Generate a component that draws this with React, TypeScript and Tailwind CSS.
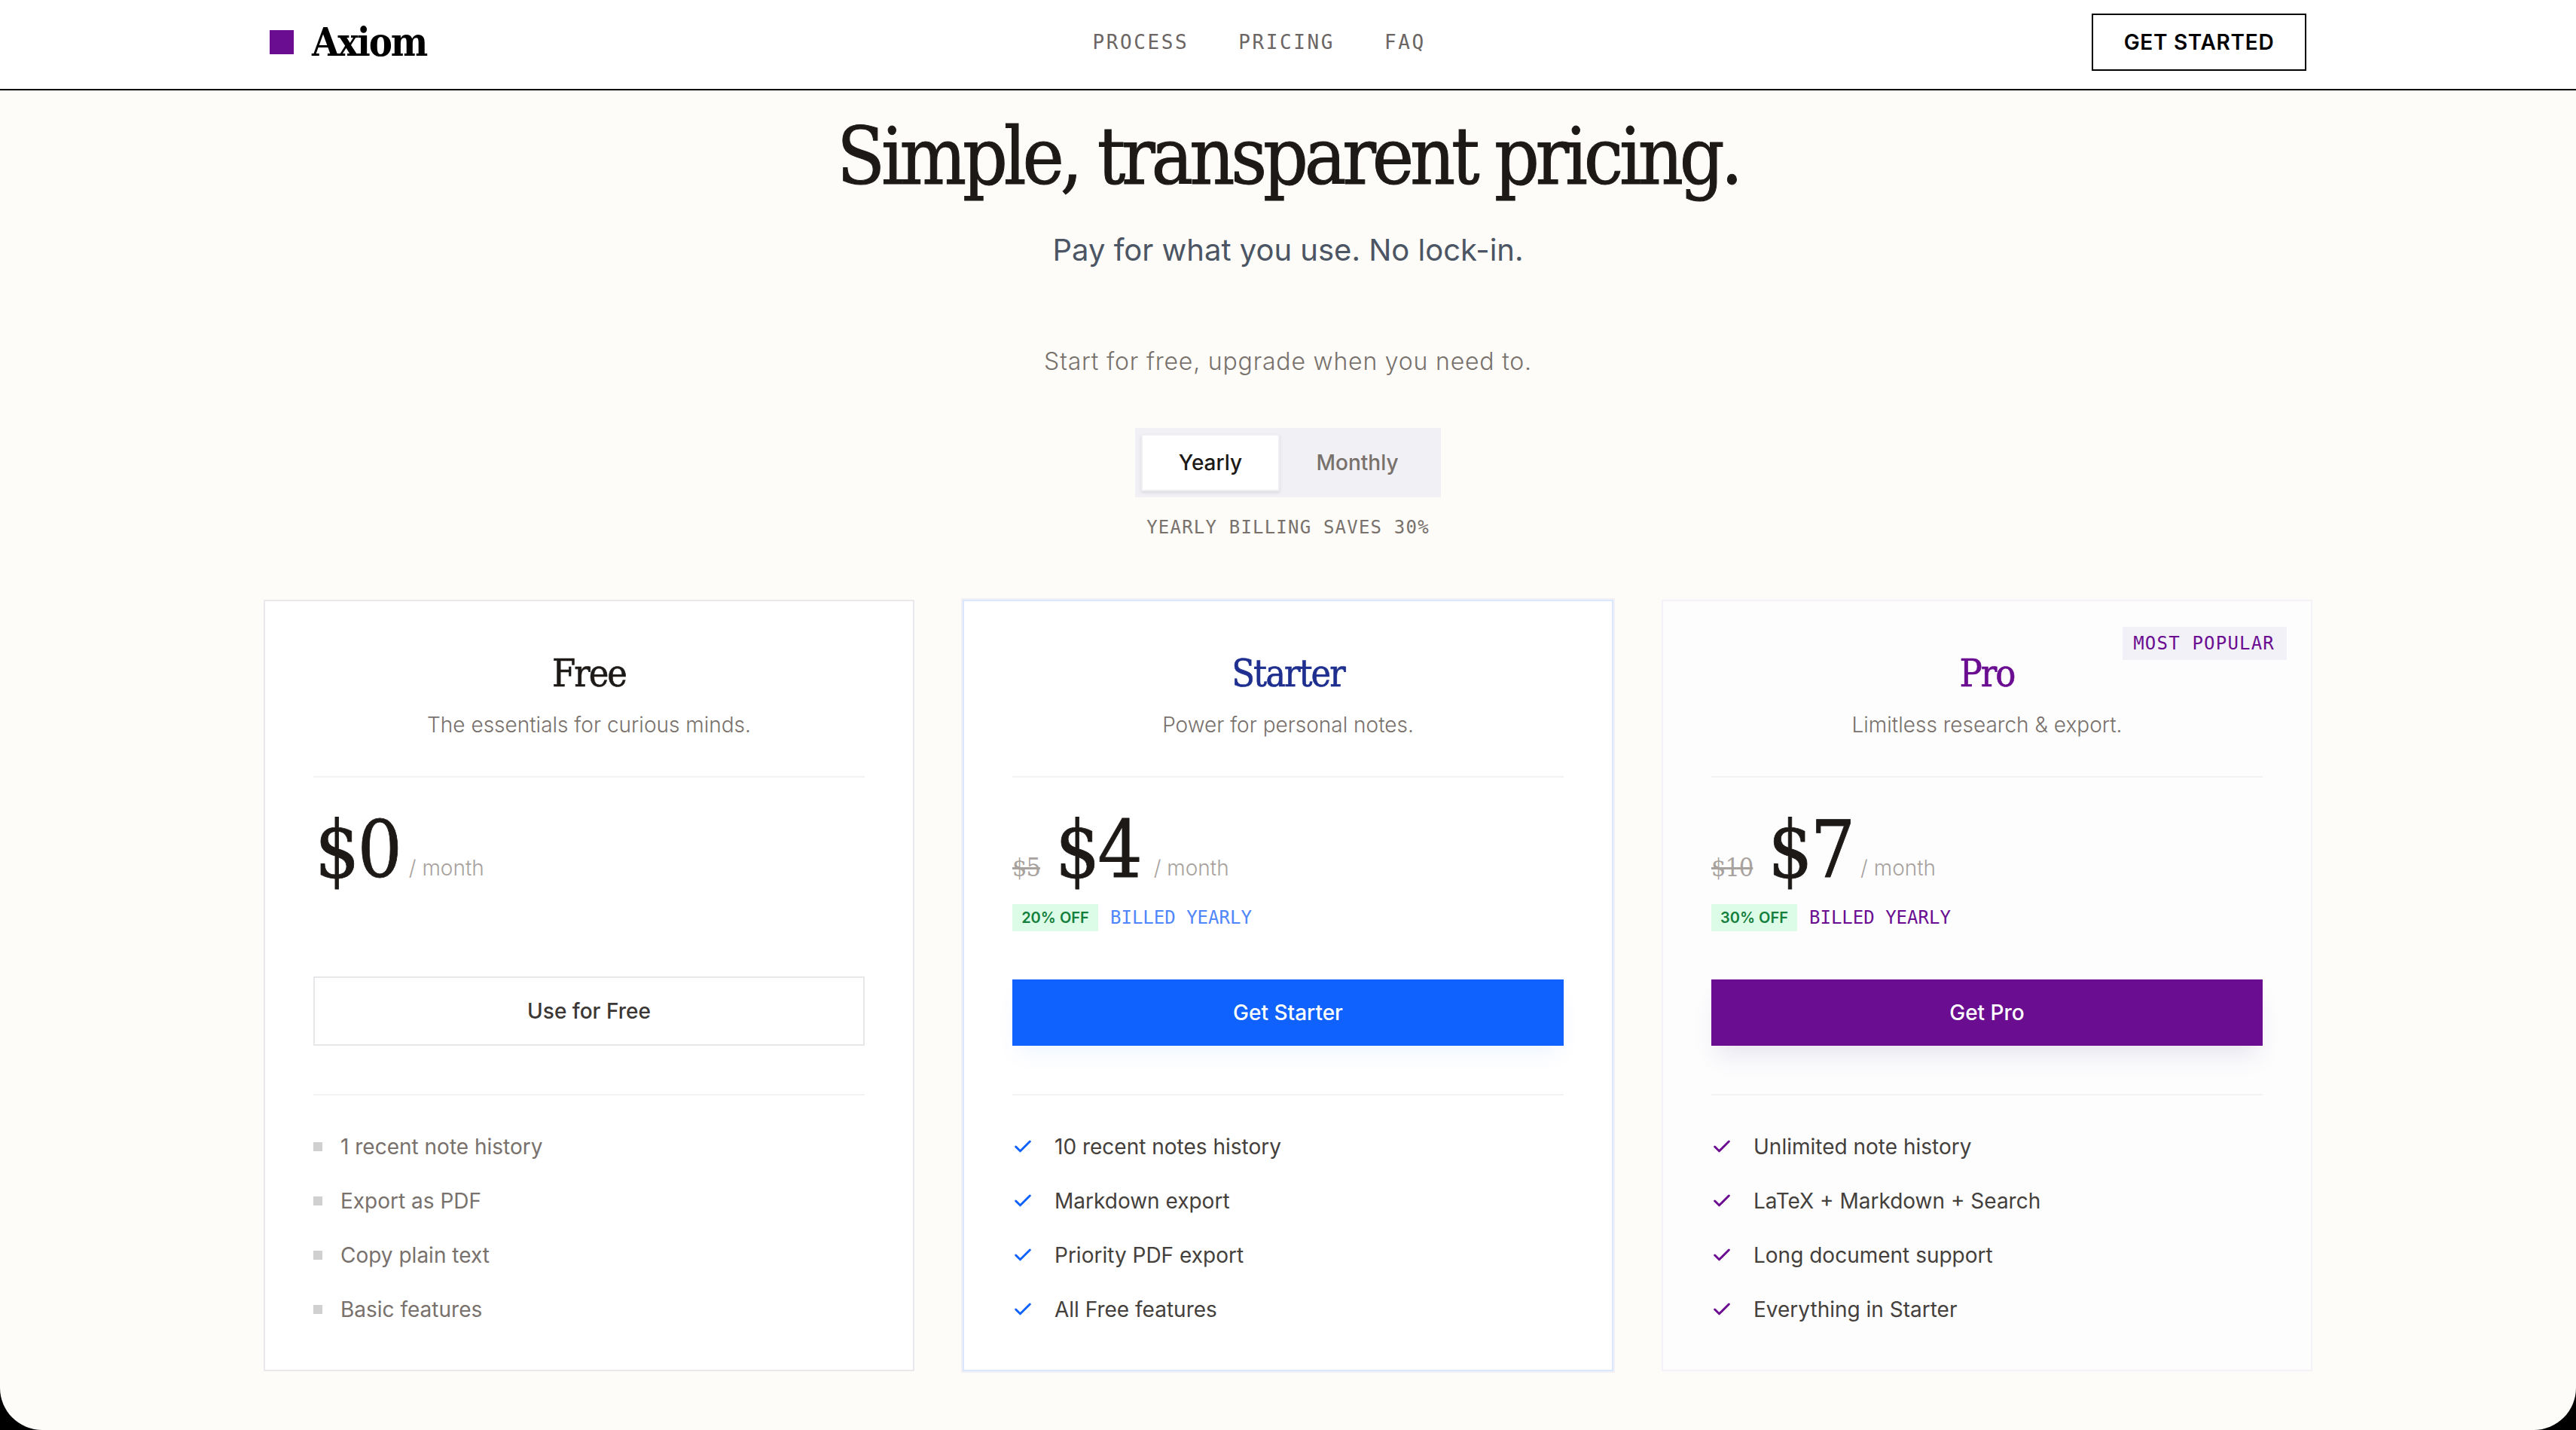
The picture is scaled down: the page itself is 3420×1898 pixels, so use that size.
import React from 'react';
import { Check } from 'lucide-react';

type Plan = {
  name: string;
  blurb: string;
  price: string;
  was?: string;
  off?: string;
  cta: string;
  features: string[];
  popular?: boolean;
};

const plans: Plan[] = [
  {
    name: 'Free',
    blurb: 'The essentials for curious minds.',
    price: '$0',
    cta: 'Use for Free',
    features: ['1 recent note history', 'Export as PDF', 'Copy plain text', 'Basic features'],
  },
  {
    name: 'Starter',
    blurb: 'Power for personal notes.',
    price: '$4',
    was: '$5',
    off: '20% OFF',
    cta: 'Get Starter',
    features: ['10 recent notes history', 'Markdown export', 'Priority PDF export', 'All Free features'],
  },
  {
    name: 'Pro',
    blurb: 'Limitless research & export.',
    price: '$7',
    was: '$10',
    off: '30% OFF',
    cta: 'Get Pro',
    features: ['Unlimited note history', 'LaTeX + Markdown + Search', 'Long document support', 'Everything in Starter'],
    popular: true,
  },
];

function PlanCard({ plan }: { plan: Plan }) {
  const isFree = plan.name === 'Free';
  const isStarter = plan.name === 'Starter';
  const isPro = plan.name === 'Pro';

  return (
    <div
      className={`relative flex flex-col px-[64px] pt-[60px] ${
        isStarter
          ? 'bg-white border-2 border-[#dbe7ff] shadow-[0_0_0_2px_#f1f0f5]'
          : isPro
            ? 'bg-[#fdfdfe] border-2 border-[#f3f2f8]'
            : 'bg-white border-2 border-[#e9e8ec]'
      }`}
    >
      {plan.popular && (
        <span className="absolute right-[32px] top-[34px] flex h-[44px] items-center bg-[#f3f1f8] pl-[14px] pr-[16px] font-['DejaVu_Sans_Mono',monospace] text-[24px] tracking-[0.05em] text-[#6a0d91]">
          MOST POPULAR
        </span>
      )}

      <h3
        className={`text-center font-['DejaVu_Serif_Condensed','DejaVu_Serif',serif] text-[50px] leading-[72px] tracking-[-0.04em] [-webkit-text-stroke-width:0.6px] ${
          isStarter ? 'text-[#1e2f8f]' : isPro ? 'text-[#6a0d91]' : 'text-[#1c1917]'
        }`}
      >
        {plan.name}
      </h3>
      <p className="mt-[12px] text-center text-[28px] font-light leading-[40px] text-[#78716c]">{plan.blurb}</p>

      <div className="mt-[48px] border-t-2 border-[#f4f3f1]" />

      <div className="mt-[40px] flex h-[112px] items-end">
        {plan.was && (
          <span className="mr-[20px] mb-[11px] font-['DejaVu_Serif_Condensed','DejaVu_Serif',serif] text-[34px] leading-[44px] tracking-[-0.03em] text-[#a8a29e] line-through">
            {plan.was}
          </span>
        )}
        <span
          className={`font-['DejaVu_Serif_Condensed','DejaVu_Serif',serif] text-[104px] leading-[112px] tracking-[-0.03em] text-[#1c1917] [-webkit-text-stroke-width:0.8px] ${
            isFree ? 'ml-[2px]' : ''
          }`}
        >
          {plan.price}
        </span>
        <span
          className={`mb-[12px] text-[28px] font-light leading-[40px] text-[#a8a29e] ${
            isStarter ? 'ml-[18px]' : isPro ? 'ml-[10px]' : 'ml-[12px]'
          }`}
        >
          / month
        </span>
      </div>

      <div className="mt-[16px] flex h-[36px] items-center gap-[16px]">
        {plan.off && (
          <>
            <span className="flex h-[36px] w-[114px] items-center justify-center bg-[#dcfce7] text-[20px] font-semibold text-[#15803d]">
              {plan.off}
            </span>
            <span
              className={`font-['DejaVu_Sans_Mono',monospace] text-[24px] ${
                isStarter ? 'text-[#4f86fb]' : 'text-[#6a0d91]'
              }`}
            >
              BILLED YEARLY
            </span>
          </>
        )}
      </div>

      <div className={isFree ? 'mt-[60px]' : 'mt-[64px]'}>
        <button
          className={`flex w-full items-center justify-center text-[28px] font-medium ${
            isFree
              ? 'h-[92px] border-2 border-[#e7e6e9] bg-white text-[#3b3735]'
              : isStarter
                ? 'h-[88px] bg-[#0f62fe] text-white shadow-[0_16px_30px_-8px_rgba(15,98,254,0.08)]'
                : 'h-[88px] bg-[#6a0d91] text-white shadow-[0_20px_30px_-6px_rgba(60,40,110,0.1)]'
          }`}
        >
          {plan.cta}
        </button>
      </div>

      <div className="mt-[64px] border-t-2 border-[#f4f3f1]" />

      <ul className="mt-[48px] flex flex-col gap-[32px] pb-[60px]">
        {plan.features.map((feature) => (
          <li key={feature} className="flex h-[40px] items-center">
            {isFree ? (
              <>
                <span className="mr-[24px] h-[12px] w-[12px] bg-[#d1d0d0]" />
                <span className="text-[28px] leading-[40px] text-[#78716c]">{feature}</span>
              </>
            ) : (
              <>
                <Check
                  strokeWidth={2.5}
                  className={`mr-[28px] h-[28px] w-[28px] ${isStarter ? 'text-[#0f62fe]' : 'text-[#6a0d91]'}`}
                />
                <span className="text-[28px] leading-[40px] text-[#44403c]">{feature}</span>
              </>
            )}
          </li>
        ))}
      </ul>
    </div>
  );
}

export default function App() {
  return (
    <div className="h-[1898px] overflow-hidden bg-black font-['Inter',sans-serif]">
      <div className="h-full overflow-hidden rounded-b-[56px] bg-[#fdfcf9]">
        {/* Top nav */}
        <header className="h-[120px] border-b-2 border-black bg-white">
          <div className="mx-auto flex h-[112px] w-[2704px] items-center justify-between">
            <div className="flex items-center gap-[24px]">
              <span className="h-[32px] w-[32px] bg-[#6a0d91]" />
              <span className="font-['DejaVu_Serif_Condensed','DejaVu_Serif',serif] text-[52px] font-bold leading-none tracking-[-0.04em] text-black">
                Axiom
              </span>
            </div>
            <nav className="flex items-center gap-[66px] font-['DejaVu_Sans_Mono',monospace] text-[26px] tracking-[0.1em] text-[#6b6663]">
              <a>PROCESS</a>
              <a>PRICING</a>
              <a>FAQ</a>
            </nav>
            <button className="h-[76px] w-[285px] border-2 border-black text-[28px] font-semibold tracking-[0.025em] text-black">
              GET STARTED
            </button>
          </div>
        </header>

        <main className="mx-auto w-[2720px]">
          <section className="flex flex-col items-center">
            <h1 className="mt-[28px] font-['DejaVu_Serif_Condensed','DejaVu_Serif',serif] text-[104px] leading-[120px] tracking-[-0.05em] text-[#1c1917] [-webkit-text-stroke-width:1px]">
              Simple, transparent pricing.
            </h1>
            <p className="mt-[36px] text-[40px] leading-[56px] text-[#4b5563]">Pay for what you use. No lock-in.</p>
            <p className="mt-[98px] text-[32px] font-light leading-[44px] tracking-[0.025em] text-[#78716c]">
              Start for free, upgrade when you need to.
            </p>

            <div className="mt-[66px] flex h-[92px] w-[406px] items-center bg-[#f1f0f5] p-[8px]">
              <button className="h-[76px] w-[184px] border-2 border-[#efeef3] bg-white text-[28px] font-medium text-[#1c1917] shadow-[0_2px_4px_rgba(0,0,0,0.1)]">
                Yearly
              </button>
              <button className="h-[76px] flex-1 text-[28px] font-medium text-[#78716c]">Monthly</button>
            </div>

            <p className="mt-[24px] font-['DejaVu_Sans_Mono',monospace] text-[24px] leading-[32px] tracking-[0.05em] text-[#78716c]">
              YEARLY BILLING SAVES 30%
            </p>
          </section>

          <section className="mt-[80px] grid grid-cols-3 gap-[64px]">
            {plans.map((plan) => (
              <PlanCard key={plan.name} plan={plan} />
            ))}
          </section>
        </main>
      </div>
    </div>
  );
}
